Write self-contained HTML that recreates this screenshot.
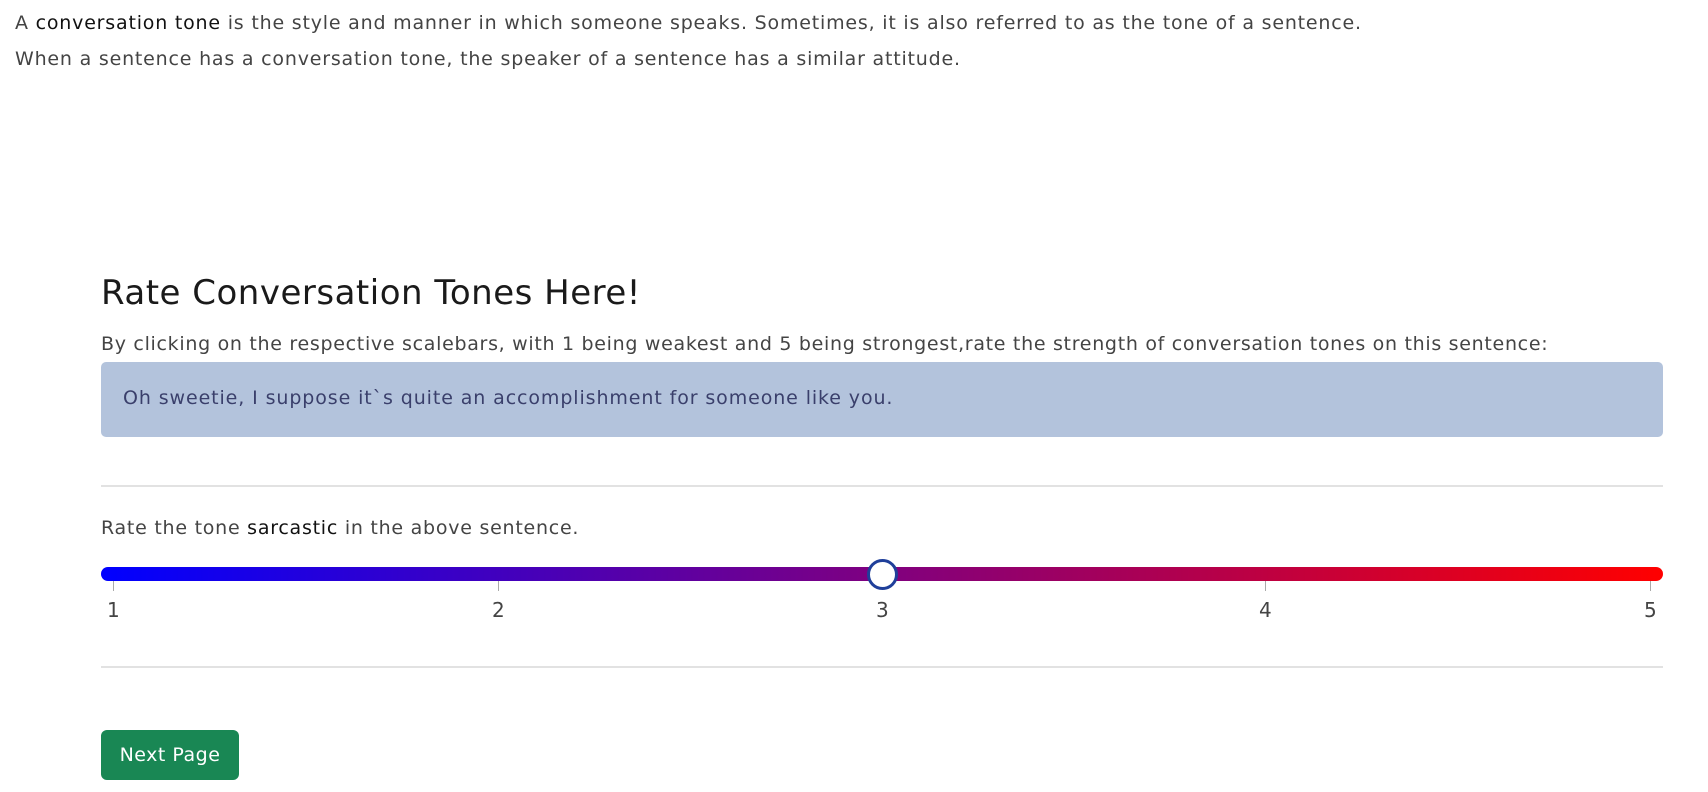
<!DOCTYPE html>
<html><head><style>
body{margin:0;width:1708px;height:792px;background:#fff;font-family:"DejaVu Sans","Liberation Sans",sans-serif;color:#444;position:relative;overflow:hidden}
.a{position:absolute;white-space:nowrap}
b{font-weight:normal;color:#111}
.t{font-size:19px;letter-spacing:0.8px}
</style></head><body>
<div class="a t" style="left:15px;top:12px;">A <b>conversation tone</b> is the style and manner in which someone speaks. Sometimes, it is also referred to as the tone of a sentence.</div>
<div class="a t" style="left:15px;top:48px;">When a sentence has a conversation tone, the speaker of a sentence has a similar attitude.</div>
<div class="a" style="left:101px;top:273px;font-size:34px;color:#1a1a1a;letter-spacing:0.5px">Rate Conversation Tones Here!</div>
<div class="a t" style="left:101px;top:333px;letter-spacing:0.7px">By clicking on the respective scalebars, with 1 being weakest and 5 being strongest,rate the strength of conversation tones on this sentence:</div>
<div class="a" style="left:101px;top:362px;width:1562px;height:75px;background:#b3c3dc;border-radius:5px"></div>
<div class="a t" style="left:123px;top:387px;color:#3a3f6b;letter-spacing:0.9px">Oh sweetie, I suppose it`s quite an accomplishment for someone like you.</div>
<div class="a" style="left:101px;top:485px;width:1562px;height:2px;background:#e2e2e2"></div>
<div class="a t" style="left:101px;top:517px;letter-spacing:0.75px">Rate the tone <b>sarcastic</b> in the above sentence.</div>
<div class="a" style="left:101px;top:567px;width:1562px;height:14px;border-radius:7px;background:linear-gradient(to right,#00f,#f00)"></div>
<div class="a" style="left:867px;top:559px;width:25px;height:25px;border-radius:50%;background:#fff;border:3px solid #1f3f9a"></div>
<div class="a" style="left:113px;top:581px;width:1px;height:10px;background:#aaa"></div>
<div class="a" style="left:498px;top:581px;width:1px;height:10px;background:#aaa"></div>
<div class="a" style="left:1265px;top:581px;width:1px;height:10px;background:#aaa"></div>
<div class="a" style="left:1650px;top:581px;width:1px;height:10px;background:#aaa"></div>
<div class="a" style="left:107px;top:598px;font-size:20px">1</div>
<div class="a" style="left:492px;top:598px;font-size:20px">2</div>
<div class="a" style="left:876px;top:598px;font-size:20px">3</div>
<div class="a" style="left:1259px;top:598px;font-size:20px">4</div>
<div class="a" style="left:1644px;top:598px;font-size:20px">5</div>
<div class="a" style="left:101px;top:666px;width:1562px;height:2px;background:#e2e2e2"></div>
<div class="a" style="left:101px;top:730px;width:138px;height:50px;background:#198754;border-radius:6px;color:#fff;font-size:19px;line-height:50px;text-align:center;letter-spacing:0.5px">Next Page</div>
</body></html>
